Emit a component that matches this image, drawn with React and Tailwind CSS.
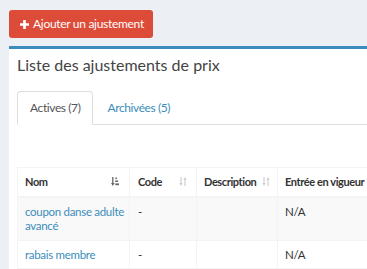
import React from "react";

const font = { fontFamily: "Lato, 'Noto Sans', sans-serif" };

function SortActive() {
  return (
    <svg width="8" height="9" viewBox="0 0 8 9" className="shrink-0">
      <path d="M1.8 0v6.5" stroke="#666" strokeWidth="1.3" />
      <path d="M0 6l1.8 3L3.6 6z" fill="#666" />
      <rect x="4.3" y="0.5" width="1.6" height="1.6" fill="#666" />
      <rect x="4.3" y="3.4" width="2.6" height="1.6" fill="#666" />
      <rect x="4.3" y="6.4" width="3.7" height="1.8" fill="#666" />
    </svg>
  );
}

function SortBoth() {
  return (
    <svg width="8" height="9" viewBox="0 0 8 9" className="shrink-0">
      <path d="M2 0v6.5" stroke="#d0d0d0" strokeWidth="1.2" />
      <path d="M0.3 6L2 9 3.7 6z" fill="#d0d0d0" />
      <path d="M6 2.5v6.5" stroke="#d0d0d0" strokeWidth="1.2" />
      <path d="M4.3 3L6 0 7.7 3z" fill="#d0d0d0" />
    </svg>
  );
}

const rows = [
  { nom: "coupon danse adulte avancé", code: "-", desc: "", date: "N/A" },
  { nom: "rabais membre", code: "-", desc: "", date: "N/A" },
];

export default function App() {
  return (
    <div className="h-[269px] w-[367px] overflow-hidden bg-[#ecf0f5] pl-[9px] pt-[10px]" style={font}>
      <button className="flex h-[28px] items-center gap-[4px] rounded-[3px] bg-[#dd4b39] pl-[11px] pr-[9px] text-[12px] tracking-[-0.3px] text-white">
        <svg width="9" height="9" viewBox="0 0 10 10">
          <path d="M3.5 0h3v3.5H10v3H6.5V10h-3V6.5H0v-3h3.5z" fill="#fff" />
        </svg>
        Ajouter un ajustement
      </button>

      <div className="mt-[8px] w-[420px] border-t-[3px] border-[#3c8dbc] bg-white">
        <div className="px-[8px] pt-[5px] pb-[5px]">
          <h3 className="text-[16px] leading-[22px] text-[#444]">Liste des ajustements de prix</h3>
        </div>

        <div className="px-[8px] pt-[10px]">
          <div className="flex border-b border-[#ddd] text-[12px] tracking-[-0.4px]">
            <div className="-mb-px flex h-[34px] items-center rounded-t-[4px] border border-b-white border-[#ddd] bg-white px-[12px] text-[#555]">
              Actives (7)
            </div>
            <div className="flex h-[33px] items-center px-[14px] text-[#3c8dbc]">Archivées (5)</div>
          </div>

          <div className="pt-[42px]">
            <table className="w-full table-fixed border-collapse border border-[#f4f4f4] text-left text-[11.5px] tracking-[-0.3px] text-[#333]">
              <thead>
                <tr className="h-[29px] text-[11px] font-bold tracking-[-0.4px]">
                  <th className="w-[112px] border-b-2 border-r border-[#f4f4f4] pl-[7px] pr-[10px]">
                    <div className="flex items-center justify-between">
                      Nom <SortActive />
                    </div>
                  </th>
                  <th className="w-[67px] border-b-2 border-r border-[#f4f4f4] pl-[8px] pr-[9px]">
                    <div className="flex items-center justify-between">
                      Code <SortBoth />
                    </div>
                  </th>
                  <th className="w-[81px] border-b-2 border-r border-[#f4f4f4] pl-[7px] pr-[7px]">
                    <div className="flex items-center justify-between">
                      Description <SortBoth />
                    </div>
                  </th>
                  <th className="border-b-2 border-r border-[#f4f4f4] px-[7px]">Entrée en vigueur</th>
                </tr>
              </thead>
              <tbody>
                {rows.map((r, idx) => (
                  <tr key={r.nom} className={idx % 2 === 0 ? "bg-[#f9f9f9]" : "bg-white"}>
                    <td className="border-r border-t border-[#f4f4f4] pl-[7px] pr-[2px] pt-[7px] pb-[6px] align-top leading-[14.5px] text-[#3c8dbc]">
                      {r.nom}
                    </td>
                    <td className="border-r border-t border-[#f4f4f4] px-[8px] pt-[7px] pb-[6px] align-top leading-[14.5px]">{r.code}</td>
                    <td className="border-r border-t border-[#f4f4f4] px-[7px] pt-[7px] pb-[6px] align-top leading-[14.5px]">{r.desc}</td>
                    <td className="border-r border-t border-[#f4f4f4] px-[7px] pt-[7px] pb-[6px] align-top leading-[14.5px]">{r.date}</td>
                  </tr>
                ))}
              </tbody>
            </table>
          </div>
        </div>
      </div>
    </div>
  );
}
